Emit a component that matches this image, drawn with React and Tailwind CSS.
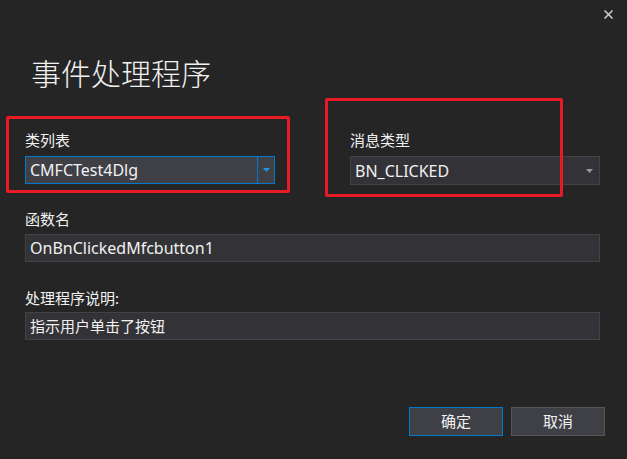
const font = { fontFamily: '"Noto Sans", "Noto Sans CJK SC", sans-serif' };

function Arrow({ color }) {
  return (
    <svg width="7" height="4" viewBox="0 0 7 4">
      <path d="M0 0 L7 0 L3.5 4 Z" fill={color} />
    </svg>
  );
}

function Label({ children, className = "" }) {
  return (
    <div className={`text-[15px] leading-[20px] text-[#f1f1f1] ${className}`}>{children}</div>
  );
}

function Field({ children, latin }) {
  return (
    <div
      className={`h-[28px] border border-[#434346] bg-[#333337] pl-[4px] flex items-center text-[#f1f1f1] ${
        latin ? "text-[16px]" : "text-[15px]"
      }`}
    >
      {children}
    </div>
  );
}

export default function App() {
  return (
    <div
      className="relative w-[627px] h-[459px] bg-[#252526] overflow-hidden flex flex-col pl-[25px] pr-[27px]"
      style={font}
    >
      {/* close */}
      <div className="flex justify-end pt-[10px] -mr-[13px]">
        <svg width="9" height="9" viewBox="0 0 9 9">
          <path d="M0.5 0.5 L8.5 8.5 M8.5 0.5 L0.5 8.5" stroke="#d0d0d0" strokeWidth="1.5" />
        </svg>
      </div>

      <div
        className="mt-[38px] ml-[6px] text-[30px] leading-[30px] font-light text-[#f1f1f1]"
        style={{ fontFamily: '"Noto Sans CJK SC", sans-serif' }}
      >
        事件处理程序
      </div>

      <div className="mt-[43px] flex justify-between">
        <div className="w-[250px]">
          <Label>类列表</Label>
          <div className="mt-[6px] h-[28px] border border-[#007acc] bg-[#3f3f46] flex text-[16px] text-[#f1f1f1]">
            <div className="flex-1 flex items-center pl-[4px]">CMFCTest4Dlg</div>
            <div className="w-[17px] border-l border-[#007acc] flex items-center justify-center">
              <Arrow color="#1c97ea" />
            </div>
          </div>
        </div>
        <div className="w-[250px]">
          <Label>消息类型</Label>
          <div className="mt-[6px] h-[29px] border border-[#434346] bg-[#333337] flex text-[16px] text-[#f1f1f1]">
            <div className="flex-1 flex items-center pl-[4px]">BN_CLICKED</div>
            <div className="w-[17px] flex items-center justify-center pr-[2px]">
              <Arrow color="#999999" />
            </div>
          </div>
        </div>
      </div>

      <Label className="mt-[24px]">函数名</Label>
      <div className="mt-[5px]">
        <Field latin>OnBnClickedMfcbutton1</Field>
      </div>

      <Label className="mt-[26px]">处理程序说明:</Label>
      <div className="mt-[4px]">
        <Field>指示用户单击了按钮</Field>
      </div>

      <div className="mt-[67px] flex justify-end gap-[8px] -mr-[5px]">
        <button className="w-[94px] h-[29px] border border-[#007acc] bg-[#3f3f46] text-[15px] text-[#f1f1f1]">
          确定
        </button>
        <button className="w-[94px] h-[29px] border border-[#555555] bg-[#3f3f46] text-[15px] text-[#f1f1f1]">
          取消
        </button>
      </div>

      {/* annotation boxes */}
      <div className="absolute left-[6px] top-[116px] w-[284px] h-[77px] border-[3px] border-[#e81a24] rounded-[2px]" />
      <div className="absolute left-[325px] top-[98px] w-[238px] h-[99px] border-[3px] border-[#e81a24] rounded-[2px]" />
    </div>
  );
}
